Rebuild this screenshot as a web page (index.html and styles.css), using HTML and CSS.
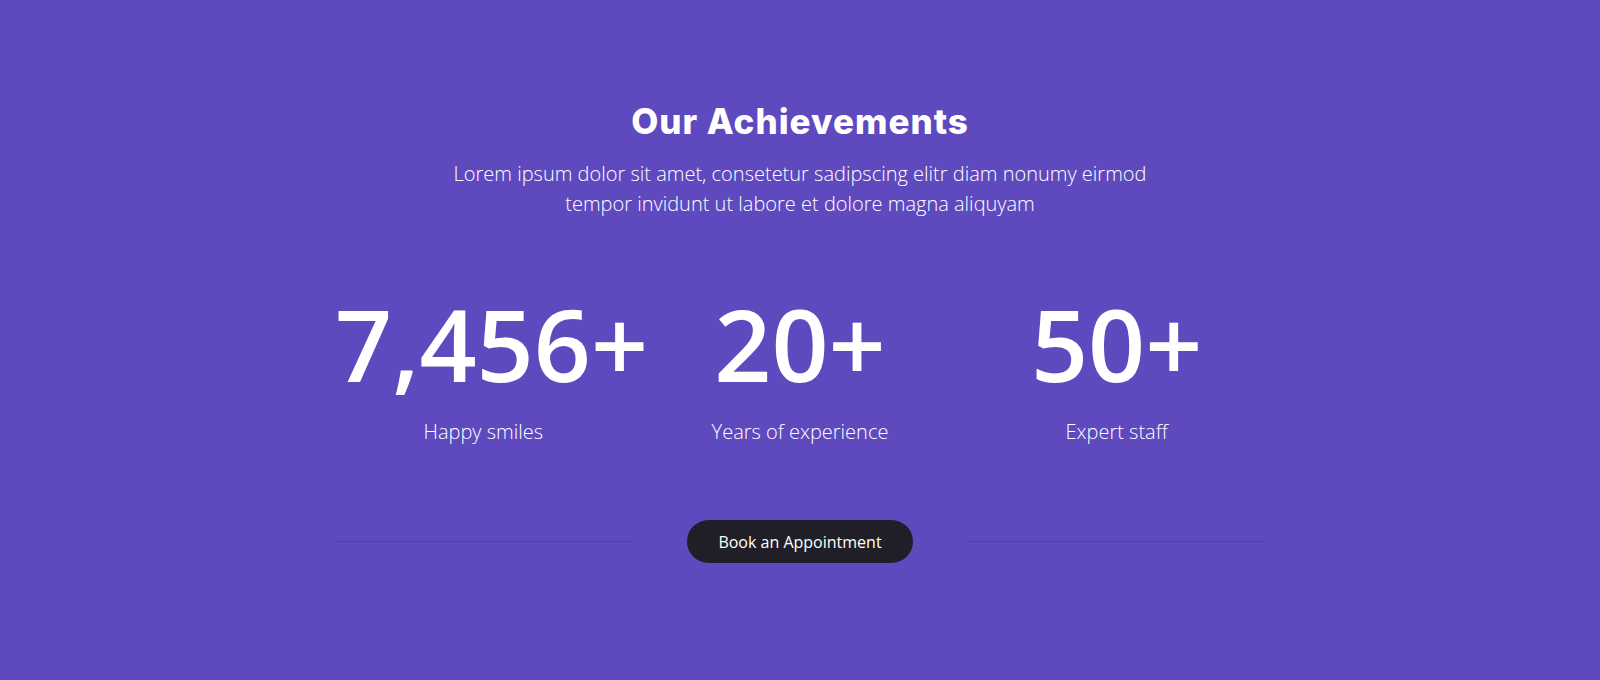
FILE: index.html
```html
<!DOCTYPE html>
<html lang="en">
<head>
<meta charset="utf-8">
<title>Our Achievements</title>
<link rel="stylesheet" href="styles.css">
</head>
<body>
<section class="achievements">
  <h2 class="title">Our Achievements</h2>
  <p class="subtitle">Lorem ipsum dolor sit amet, consetetur sadipscing elitr diam nonumy eirmod<br>tempor invidunt ut labore et dolore magna aliquyam</p>
  <div class="stats">
    <div class="stat">
      <div class="stat-number">7,456+</div>
      <div class="stat-label">Happy smiles</div>
    </div>
    <div class="stat">
      <div class="stat-number">20+</div>
      <div class="stat-label">Years of experience</div>
    </div>
    <div class="stat">
      <div class="stat-number">50+</div>
      <div class="stat-label">Expert staff</div>
    </div>
  </div>
  <div class="cta-row">
    <span class="rule"></span>
    <a class="btn" href="#">Book an Appointment</a>
    <span class="rule"></span>
  </div>
</section>
</body>
</html>
```

FILE: styles.css
```css
* { box-sizing: border-box; }

html, body {
  margin: 0;
  padding: 0;
}

body {
  background: #5f49bf;
  font-family: "Open Sans", "Liberation Sans", sans-serif;
  color: #ffffff;
}

.achievements {
  height: 680px;
  padding-top: 100px;
  display: flex;
  flex-direction: column;
  align-items: center;
  background: #5f49bf;
}

.title {
  margin: 0;
  font-family: Inter, "DejaVu Sans", sans-serif;
  font-weight: 800;
  font-size: 35px;
  line-height: 42px;
  letter-spacing: 1px;
  color: #ffffff;
}

.subtitle {
  margin: 17px 0 0;
  font-weight: 300;
  font-size: 20px;
  line-height: 30px;
  text-align: center;
  color: #ffffff;
}

.stats {
  margin-top: 74px;
  width: 950px;
  display: grid;
  grid-template-columns: repeat(3, 1fr);
}

.stat {
  padding: 0 10px;
  text-align: center;
  min-width: 0;
}

.stat-number {
  font-weight: 600;
  font-size: 100px;
  line-height: 100px;
  white-space: nowrap;
}

.stat-label {
  margin-top: 25px;
  font-weight: 300;
  font-size: 20px;
  line-height: 28px;
}

.cta-row {
  margin-top: 74px;
  width: 930px;
  display: flex;
  align-items: center;
  gap: 53px;
}

.rule {
  flex: 1;
  height: 1px;
  background: rgba(40, 20, 120, 0.25);
}

.btn {
  display: inline-flex;
  align-items: center;
  justify-content: center;
  width: 226px;
  height: 43px;
  border-radius: 22px;
  background: #201f27;
  color: #ffffff;
  font-size: 16px;
  font-weight: 400;
  text-decoration: none;
}
```
